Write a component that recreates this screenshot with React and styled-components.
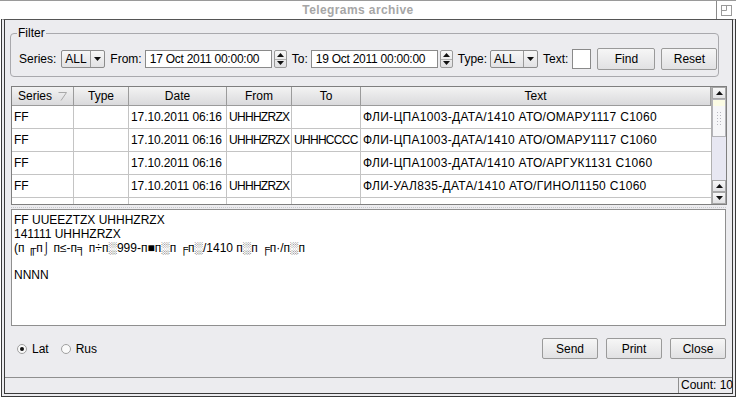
import React from "react";
import styled, { createGlobalStyle } from "styled-components";

const GlobalStyle = createGlobalStyle`
  html, body {
    margin: 0;
    padding: 0;
    background: #fff;
  }
  body {
    font-family: "Liberation Sans", Arial, sans-serif;
    font-size: 12px;
    color: #000;
  }
`;

const Desktop = styled.div`
  width: 738px;
  height: 397px;
  display: flex;
  background: #fff;
  overflow: hidden;
`;

const Window = styled.div`
  width: 736px;
  display: flex;
  flex-direction: column;
`;

const TitleBar = styled.div`
  height: 18px;
  border-top: 1px solid #9a9a9a;
  display: flex;
  align-items: center;
  background: #fff;
`;

const Title = styled.div`
  flex: 1;
  text-align: center;
  color: #a6a6a6;
  font-weight: bold;
  font-size: 12px;
  letter-spacing: 0.4px;
`;

const TitleButton = styled.div`
  width: 19px;
  align-self: stretch;
  border-left: 1px solid #8a8a8a;
  display: flex;
  align-items: center;
  justify-content: center;
`;

const Body = styled.div`
  flex: 1;
  display: flex;
  flex-direction: column;
  background: #ececef;
  border: 4px double #3a3a3a;
  border-top: 1px solid #555;
  margin-left: 1px;
  min-height: 0;
`;

const Content = styled.div`
  flex: 1;
  display: flex;
  flex-direction: column;
  padding: 7px 6px 0 6px;
  min-height: 0;
`;

const Group = styled.fieldset`
  margin: 0 7px 0 -1px;
  padding: 9px 0 6px 8px;
  border: 1px solid #a9a9ad;
  border-radius: 4px;
  min-width: 0;
  height: 50px;
  box-sizing: border-box;
`;

const Legend = styled.legend`
  padding: 0 1px;
  margin-left: -2px;
  font-size: 12px;
  line-height: 12px;
`;

const FilterRow = styled.div`
  display: flex;
  align-items: center;
  height: 22px;
  gap: 5px;
  & > * {
    flex-shrink: 0;
  }
`;

const Label = styled.span`
  white-space: nowrap;
  margin-right: ${(p) => p.$mr || 0}px;
`;

const Combo = styled.div`
  width: ${(p) => p.$w}px;
  height: 18px;
  box-sizing: border-box;
  border: 1px solid #8c8c8c;
  border-radius: 2px;
  display: flex;
  background: linear-gradient(#f7f7f7, #e2e2e4);
`;

const ComboText = styled.div`
  flex: 1;
  padding-left: 3px;
  line-height: 16px;
`;

const ComboArrow = styled.div`
  width: 13px;
  border-left: 1px solid #9a9a9a;
  display: flex;
  align-items: center;
  justify-content: center;
`;

const Input = styled.div`
  width: ${(p) => p.$w}px;
  height: ${(p) => p.$h || 18}px;
  box-sizing: border-box;
  border: 1px solid #8a8a8a;
  background: #fff;
  padding-left: 4px;
  line-height: 16px;
  white-space: nowrap;
  overflow: hidden;
  letter-spacing: -0.25px;
`;

const Spinner = styled.div`
  width: 13px;
  height: 18px;
  margin-left: -3px;
  display: flex;
  flex-direction: column;
  box-sizing: border-box;
  border: 1px solid #9a9a9a;
  border-radius: 2px;
  background: linear-gradient(#f7f7f7, #e0e0e2);
`;

const SpinHalf = styled.div`
  flex: 1;
  display: flex;
  align-items: center;
  justify-content: center;
  border-top: ${(p) => (p.$bottom ? "1px solid #b0b0b0" : "none")};
`;

const Button = styled.div`
  width: ${(p) => p.$w || 56}px;
  height: ${(p) => p.$h || 21}px;
  box-sizing: border-box;
  border: 1px solid #9a9a9a;
  border-radius: 2px;
  background: linear-gradient(#f6f6f6, #e1e1e3);
  display: flex;
  align-items: center;
  justify-content: center;
  margin-left: ${(p) => p.$ml || 0}px;
`;

const Table = styled.div`
  margin-top: 9px;
  margin-right: -1px;
  height: 119px;
  box-sizing: border-box;
  border: 1px solid #7f7f7f;
  display: flex;
  background: #fff;
  overflow: hidden;
`;

const Grid = styled.div`
  flex: 1;
  display: grid;
  grid-template-columns: 62px 55px 98px 65px 69px 1fr;
  grid-auto-rows: 23px;
  grid-template-rows: 19px;
  overflow: hidden;
`;

const HeadCell = styled.div`
  background: linear-gradient(#f3f3f3, #dadadc);
  border-right: 1px solid #9b9b9b;
  border-bottom: 1px solid #9b9b9b;
  display: flex;
  align-items: center;
  justify-content: center;
  gap: 6px;
  &:last-child {
    border-right: none;
  }
`;

const Cell = styled.div`
  border-right: ${(p) => (p.$last ? "none" : "1px solid #c4c4c4")};
  border-bottom: 1px solid #c4c4c4;
  padding-left: 2px;
  display: flex;
  align-items: center;
  white-space: nowrap;
  overflow: hidden;
  letter-spacing: ${(p) => p.$ls || 0}px;
`;

const ScrollBar = styled.div`
  width: 14px;
  border-left: 1px solid #b0b0b0;
  background: #e7e7f2;
  display: flex;
  flex-direction: column;
`;

const ScrollBtn = styled.div`
  height: 12px;
  box-sizing: border-box;
  border: 1px solid #a8a8a8;
  background: linear-gradient(#f8f8f8, #e2e2e4);
  display: flex;
  align-items: center;
  justify-content: center;
`;

const ScrollTrack = styled.div`
  flex: 1;
  display: flex;
  flex-direction: column;
`;

const Thumb = styled.div`
  height: 38px;
  box-sizing: border-box;
  border: 1px solid #b3b3b8;
  background: linear-gradient(#fbfbe4 0 6px, #f6f6f8 6px);
  display: flex;
  align-items: center;
  justify-content: center;
`;

const Grip = styled.div`
  width: 6px;
  height: 14px;
  background-image: radial-gradient(#b8b8c0 0.8px, transparent 0.9px);
  background-size: 3px 3px;
`;

const Splitter = styled.div`
  height: 4px;
  display: flex;
  align-items: center;
  &::after {
    content: "";
    flex: 1;
    border-top: 1px dotted #c8c8cc;
  }
`;

const TextArea = styled.div`
  height: 117px;
  box-sizing: border-box;
  border: 1px solid #8f8f8f;
  background: #fff;
  padding: 4px 2px;
  line-height: 13.8px;
  white-space: pre;
  overflow: hidden;
`;

const BottomRow = styled.div`
  margin-top: 12px;
  height: 21px;
  display: flex;
  align-items: center;
`;

const RadioGroup = styled.div`
  flex: 1;
  display: flex;
  align-items: center;
  padding-left: 6px;
`;

const Radio = styled.span`
  width: 10px;
  height: 10px;
  box-sizing: border-box;
  border-radius: 50%;
  border: 1px solid #a0a0a0;
  background: #fafafa;
  display: inline-flex;
  align-items: center;
  justify-content: center;
  margin-right: 5px;
  &::after {
    content: "";
    width: 4px;
    height: 4px;
    border-radius: 50%;
    background: ${(p) => (p.$checked ? "#111" : "transparent")};
  }
`;

const RadioLabel = styled.span`
  margin-right: 12px;
`;

const StatusBar = styled.div`
  height: 16px;
  box-sizing: border-box;
  border-top: 1px solid #8f8f8f;
  display: flex;
`;

const StatusFill = styled.div`
  flex: 1;
`;

const StatusCount = styled.div`
  width: 51px;
  border-left: 1px solid #8f8f8f;
  padding-left: 2px;
  line-height: 15px;
  white-space: nowrap;
`;

const Tri = ({ down }) => (
  <svg width="7" height="4" viewBox="0 0 7 4">
    <path d={down ? "M0 0h7L3.5 4z" : "M0 4h7L3.5 0z"} fill="#111" />
  </svg>
);

const SortMark = () => (
  <svg width="9" height="9" viewBox="0 0 9 9">
    <path d="M0.5 0.5h8M8.5 0.5L3 8.5" stroke="#a8a8a8" strokeWidth="1" fill="none" />
  </svg>
);

const RestoreIcon = () => (
  <svg width="11" height="11" viewBox="0 0 11 11">
    <rect x="0.5" y="0.5" width="10" height="10" fill="none" stroke="#9a9a9a" />
    <path d="M5.5 0.5v5h-5" fill="none" stroke="#9a9a9a" />
  </svg>
);

const columns = ["Series", "Type", "Date", "From", "To", "Text"];

// letter spacing per column, to match the narrow latin / wide cyrillic of the original font
const colSpacing = [0, 0, -0.1, -0.7, -0.7, 0.3];

const rows = [
  ["FF", "", "17.10.2011 06:16", "UHHHZRZX", "", "ФЛИ-ЦПА1003-ДАТА/1410 АТО/ОМАРУ1117 С1060"],
  ["FF", "", "17.10.2011 06:16", "UHHHZRZX", "UHHHCCCC", "ФЛИ-ЦПА1003-ДАТА/1410 АТО/ОМАРУ1117 С1060"],
  ["FF", "", "17.10.2011 06:16", "", "", "ФЛИ-ЦПА1003-ДАТА/1410 АТО/АРГУК1131 С1060"],
  ["FF", "", "17.10.2011 06:16", "UHHHZRZX", "", "ФЛИ-УАЛ835-ДАТА/1410 АТО/ГИНОЛ1150 С1060"],
  ["", "", "", "", "", "ФЛИ-ЦПА1003-ДАТА/1410 АТО/ОМАРУ1117 С1060"],
];

const message = [
  "FF UUEEZTZX UHHHZRZX",
  "141111 UHHHZRZX",
  "(п ╓п⌡ п≤-п╕ п÷п░999-п■п░п ╒п░/1410 п░п ╒п·/п░п",
  "",
  "NNNN",
].join("\n");

const DateField = ({ value }) => (
  <>
    <Input $w={127}>{value}</Input>
    <Spinner>
      <SpinHalf>
        <Tri />
      </SpinHalf>
      <SpinHalf $bottom>
        <Tri down />
      </SpinHalf>
    </Spinner>
  </>
);

const Select = ({ width, value }) => (
  <Combo $w={width}>
    <ComboText>{value}</ComboText>
    <ComboArrow>
      <Tri down />
    </ComboArrow>
  </Combo>
);

export default function App() {
  return (
    <>
      <GlobalStyle />
      <Desktop>
        <Window>
          <TitleBar>
            <Title>Telegrams archive</Title>
            <TitleButton>
              <RestoreIcon />
            </TitleButton>
          </TitleBar>
          <Body>
            <Content>
              <Group>
                <Legend>Filter</Legend>
                <FilterRow>
                  <Label>Series:</Label>
                  <Select width={44} value="ALL" />
                  <Label $mr={-2}>From:</Label>
                  <DateField value="17 Oct 2011 00:00:00" />
                  <Label $mr={-2}>To:</Label>
                  <DateField value="19 Oct 2011 00:00:00" />
                  <Label $mr={-2}>Type:</Label>
                  <Select width={48} value="ALL" />
                  <Label $mr={-1}>Text:</Label>
                  <Input $w={19} $h={20} />
                  <Button $w={58} $h={22} $ml={1}>Find</Button>
                  <Button $w={56} $h={22} $ml={1}>Reset</Button>
                </FilterRow>
              </Group>

              <Table>
                <Grid>
                  {columns.map((c) => (
                    <HeadCell key={c}>
                      {c}
                      {c === "Series" && <SortMark />}
                    </HeadCell>
                  ))}
                  {rows.map((r, i) =>
                    r.map((v, j) => (
                      <Cell key={i + "-" + j} $last={j === r.length - 1} $ls={colSpacing[j]}>
                        {v}
                      </Cell>
                    ))
                  )}
                </Grid>
                <ScrollBar>
                  <ScrollBtn>
                    <Tri />
                  </ScrollBtn>
                  <ScrollTrack>
                    <Thumb>
                      <Grip />
                    </Thumb>
                  </ScrollTrack>
                  <ScrollBtn>
                    <Tri />
                  </ScrollBtn>
                  <ScrollBtn>
                    <Tri down />
                  </ScrollBtn>
                </ScrollBar>
              </Table>

              <Splitter />
              <TextArea>{message}</TextArea>

              <BottomRow>
                <RadioGroup>
                  <Radio $checked />
                  <RadioLabel>Lat</RadioLabel>
                  <Radio />
                  <RadioLabel>Rus</RadioLabel>
                </RadioGroup>
                <Button>Send</Button>
                <Button $ml={8}>Print</Button>
                <Button $ml={8}>Close</Button>
              </BottomRow>
            </Content>
            <StatusBar>
              <StatusFill />
              <StatusCount>Count: 10</StatusCount>
            </StatusBar>
          </Body>
        </Window>
      </Desktop>
    </>
  );
}
